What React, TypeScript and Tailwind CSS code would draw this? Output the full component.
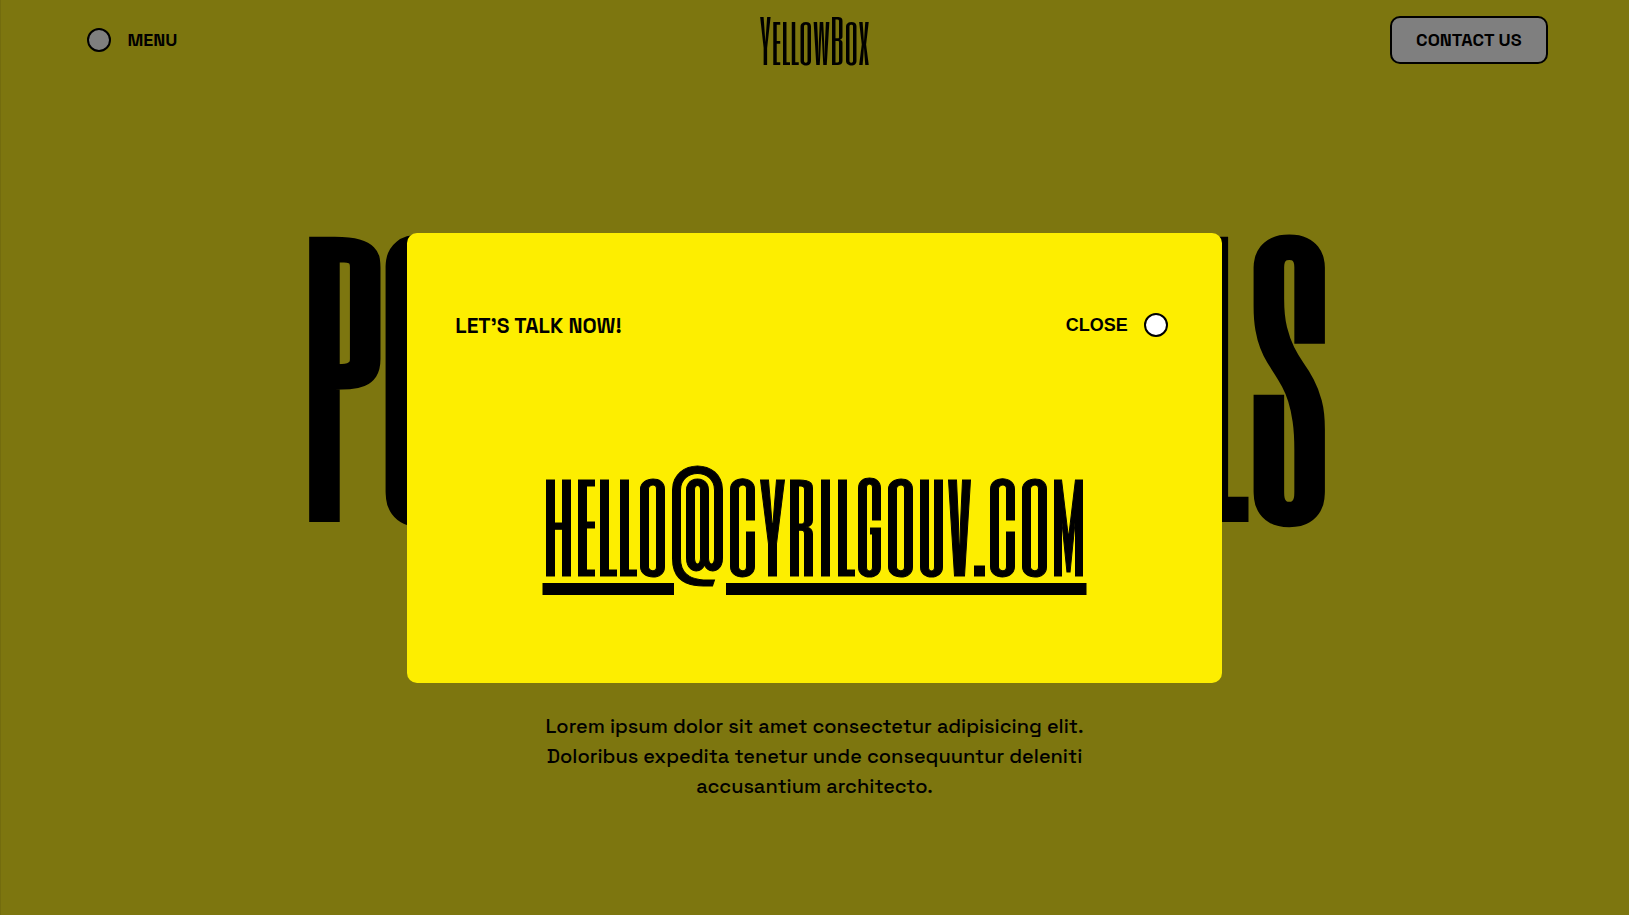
import { useState } from "react";

function Dot() {
  return <span aria-hidden="true" className="block size-6 shrink-0 rounded-full border-2 border-black bg-white" />;
}

function Header({ onContact }: { onContact: () => void }) {
  return (
    <header className="grid h-20 grid-cols-3 items-center px-[5%]">
      <button type="button" className="flex items-center gap-4 justify-self-start px-1.5 text-lg font-bold">
        <Dot />
        MENU
      </button>
      <a href="#" className="justify-self-center font-['Six_Caps','Roboto_Condensed',sans-serif] text-[56px] leading-[80px]">
        YellowBox
      </a>
      <button
        type="button"
        onClick={onContact}
        className="h-12 justify-self-end rounded-[10px] border-2 border-black bg-white px-6 text-lg font-bold"
      >
        CONTACT US
      </button>
    </header>
  );
}

function ContactDialog({ onClose }: { onClose: () => void }) {
  return (
    <div className="fixed inset-0 flex items-center justify-center bg-black/50">
      <section
        role="dialog"
        aria-modal="true"
        aria-labelledby="contact-title"
        className="flex min-h-[450px] w-1/2 flex-col rounded-[10px] bg-[#fdee00] px-12 pt-[77px] pb-[100px]"
      >
        <div className="flex items-center justify-between">
          <h2 id="contact-title" className="text-[21px] font-bold">
            LET’S TALK NOW!
          </h2>
          <button
            type="button"
            onClick={onClose}
            className="flex items-center gap-4 px-1.5 font-['Liberation_Sans',sans-serif] text-lg font-bold"
          >
            CLOSE
            <Dot />
          </button>
        </div>
        <a
          href="mailto:hello@cyrilgouv.com"
          className="mt-auto self-center font-['Six_Caps','Roboto_Condensed',sans-serif] text-[128px] leading-[128px] underline [-webkit-text-stroke:1px_#000]"
        >
          hello@cyrilgouv.com
        </a>
      </section>
    </div>
  );
}

export default function App() {
  const [open, setOpen] = useState(true);
  return (
    <div className="flex min-h-screen flex-col bg-[#fbec1e] font-['Space_Grotesk','Inter',sans-serif] text-black shadow-[inset_1px_0_0_#e6d81c]">
      <Header onContact={() => setOpen(true)} />
      <main className="flex flex-1 flex-col items-center pt-[148px] text-center">
        <h1 className="font-['Six_Caps','Roboto_Condensed',sans-serif] text-[326px] leading-[288px] font-bold whitespace-nowrap uppercase">
          Powerful Tools
        </h1>
        <p className="mt-[195px] max-w-[560px] text-xl leading-[30px] font-medium">
          Lorem ipsum dolor sit amet consectetur adipisicing elit. Doloribus expedita tenetur unde consequuntur deleniti
          accusantium architecto.
        </p>
      </main>
      {open && <ContactDialog onClose={() => setOpen(false)} />}
    </div>
  );
}
